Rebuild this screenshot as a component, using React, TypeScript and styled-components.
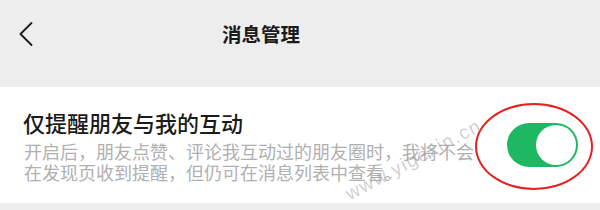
import React from "react";
import styled, { createGlobalStyle } from "styled-components";

const GlobalStyle = createGlobalStyle`
  html, body {
    margin: 0;
    padding: 0;
    background: #ededed;
    font-family: "Noto Sans CJK SC", "Noto Sans", sans-serif;
  }
`;

const Page = styled.div`
  width: 600px;
  height: 210px;
  background: #ededed;
  display: flex;
  flex-direction: column;
  overflow: hidden;
`;

const Header = styled.header`
  height: 68px;
  margin-bottom: 19px;
  display: flex;
  align-items: center;
  padding-left: 19px;
`;

const BackButton = styled.button`
  width: 16px;
  height: 26px;
  padding: 0;
  border: none;
  background: transparent;
  display: flex;
  align-items: center;
`;

const Title = styled.h1`
  margin: 0 0 0 187px;
  font-size: 19.5px;
  font-weight: 700;
  color: #1a1a1a;
  line-height: 28px;
  letter-spacing: 0;
`;

const Card = styled.section`
  position: relative;
  background: #ffffff;
  height: 116px;
  box-sizing: border-box;
  padding: 20px 22px 20px 24px;
  display: flex;
  align-items: center;
  justify-content: space-between;
`;

const TextBlock = styled.div`
  width: 458px;
  display: flex;
  flex-direction: column;
  gap: 4px;
`;

const ItemTitle = styled.div`
  font-size: 22px;
  font-weight: 500;
  line-height: 30px;
  color: #1b1b1b;
  margin-left: -1px;
`;

const ItemDesc = styled.div`
  font-size: 18px;
  line-height: 21px;
  color: #b0b0b0;
`;

const SwitchWrap = styled.div`
  position: relative;
  width: 71px;
  height: 44px;
`;

const Track = styled.div<{ $on: boolean }>`
  width: 71px;
  height: 44px;
  border-radius: 22px;
  background: ${(p) => (p.$on ? "#1fb862" : "#e5e5e5")};
  box-sizing: border-box;
  padding: 2px;
  display: flex;
  justify-content: ${(p) => (p.$on ? "flex-end" : "flex-start")};
`;

const Knob = styled.div`
  width: 40px;
  height: 40px;
  border-radius: 50%;
  background: #ffffff;
`;

const Ring = styled.div`
  position: absolute;
  left: -32px;
  top: -20px;
  width: 118px;
  height: 87px;
  box-sizing: border-box;
  border: 2.5px solid #e2231f;
  border-radius: 50%;
  pointer-events: none;
`;

const Watermark = styled.div`
  position: absolute;
  left: 352px;
  top: 96px;
  font-family: "Liberation Sans", Arial, sans-serif;
  font-size: 19px;
  letter-spacing: 1.5px;
  color: rgba(150, 150, 150, 0.45);
  transform: rotate(-28deg);
  transform-origin: left bottom;
  white-space: nowrap;
  pointer-events: none;
`;

export default function App() {
  return (
    <Page>
      <GlobalStyle />
      <Header>
        <BackButton aria-label="返回">
          <svg width="14" height="24" viewBox="0 0 14 24">
            <path
              d="M12.5 1 L1.5 12 L12.5 23"
              fill="none"
              stroke="#1a1a1a"
              strokeWidth="1.8"
              strokeLinecap="round"
              strokeLinejoin="round"
            />
          </svg>
        </BackButton>
        <Title>消息管理</Title>
      </Header>
      <Card>
        <TextBlock>
          <ItemTitle>仅提醒朋友与我的互动</ItemTitle>
          <ItemDesc>
            开启后，朋友点赞、评论我互动过的朋友圈时，我将不会在发现页收到提醒，但仍可在消息列表中查看。
          </ItemDesc>
        </TextBlock>
        <SwitchWrap>
          <Track $on>
            <Knob />
          </Track>
          <Ring />
        </SwitchWrap>
        <Watermark>www.yigexin.cn</Watermark>
      </Card>
    </Page>
  );
}
